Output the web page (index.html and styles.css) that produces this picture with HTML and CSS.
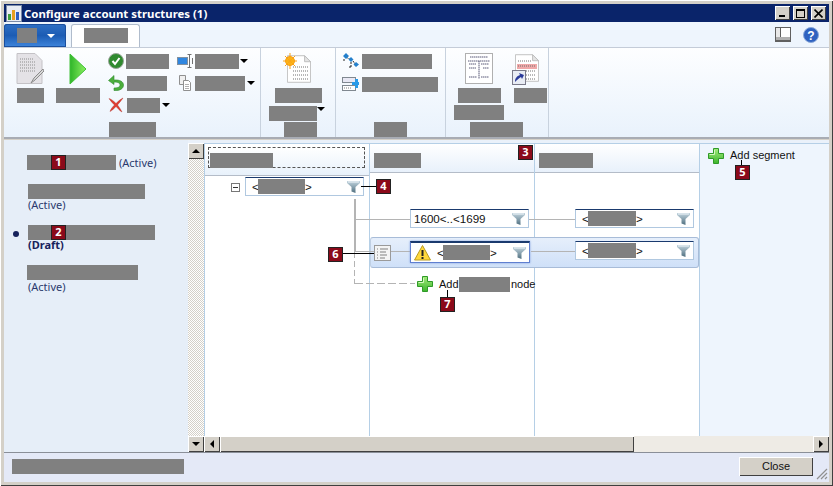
FILE: index.html
```html
<!DOCTYPE html>
<html>

<head>
    <meta charset="UTF-8">
    <title>Configure account structures (1)</title>
    <link rel="stylesheet" href="styles.css">
</head>

<body>
    <svg class="defs" width="0" height="0">
        <defs>
            <linearGradient id="g_green" x1="0" y1="0" x2="0" y2="1">
                <stop offset="0" stop-color="#a4ec7c" />
                <stop offset="1" stop-color="#3cb52c" />
            </linearGradient>
            <linearGradient id="g_play" x1="0" y1="0" x2="1" y2="0">
                <stop offset="0" stop-color="#2fb52a" />
                <stop offset="1" stop-color="#8cf060" />
            </linearGradient>
            <linearGradient id="g_filter" x1="0" y1="0" x2="0" y2="1">
                <stop offset="0" stop-color="#c4d6e0" />
                <stop offset="1" stop-color="#4f6f7f" />
            </linearGradient>
            <symbol id="i_plus" viewBox="0 0 16 16">
                <path d="M5.500 .5h5v5h5v5h-5v5h-5v-5h-5v-5h5z" fill="url(#g_green)" stroke="#2f9a28" />
                <path d="M6.500 2v4.500h-5" fill="none" stroke="#d6f8c0" />
            </symbol>
            <symbol id="i_filter" viewBox="0 0 13 12">
                <path d="M0 0h13v2l-4.500 4v6l-4-1.500v-4.500l-4.500-4z" fill="url(#g_filter)" />
                <path d="M1 1h11" stroke="#eef4f8" />
            </symbol>
            <symbol id="i_page" viewBox="0 0 28 32">
                <path d="M.5 .5h20l7 7v24h-27z" fill="#fff" stroke="#b8b8b8" />
                <path d="M20.500 .5v7h7z" fill="#e4e4e4" stroke="#b8b8b8" />
            </symbol>
        </defs>
    </svg>

    <div class="window">
        <!-- 标题栏 -->
        <div class="titlebar">
            <svg class="title_icon" width="16" height="17" viewBox="0 0 16 17">
                <rect x=".5" y=".5" width="15" height="16" fill="#e8ecf4" stroke="#7a8aa8" />
                <rect x="2" y="9" width="3" height="6" fill="#3f9f3f" />
                <rect x="6" y="5" width="3" height="10" fill="#e8a020" />
                <rect x="10" y="7" width="3" height="8" fill="#3060c0" />
            </svg>
            <span class="title_text">Configure account structures (1)</span>
            <div class="win_btns">
                <div class="win_btn"><i class="min_mark"></i></div>
                <div class="win_btn"><i class="max_mark"></i></div>
                <div class="win_btn win_close">
                    <svg width="9" height="9" viewBox="0 0 9 9">
                        <path d="M.5 .5l8 8M8.500 .5l-8 8" stroke="#000" stroke-width="1.600" />
                    </svg>
                </div>
            </div>
        </div>

        <!-- 选项卡 -->
        <div class="tabrow">
            <div class="file_btn"><span class="gray w20"></span><i class="file_arrow"></i></div>
            <div class="tab"><span class="gray w44"></span></div>
            <div class="tab_tools">
                <svg width="16" height="15" viewBox="0 0 16 15">
                    <rect x=".5" y=".5" width="15" height="13" fill="#fff" stroke="#606060" />
                    <rect x="1" y="10" width="14" height="3" fill="#b0b0b0" />
                    <rect x="1" y="1" width="4" height="9" fill="#e8e8e8" />
                    <path d="M5.500 1v9M0 14.500h16" stroke="#606060" />
                </svg>
                <svg width="16" height="16" viewBox="0 0 16 16">
                    <circle cx="8" cy="8" r="7.500" fill="#2f62c0" stroke="#8aa8d8" />
                    <text x="8" y="12.500" class="help_mark">?</text>
                </svg>
            </div>
        </div>

        <!-- 功能区 -->
        <div class="ribbon">
            <div class="group group_a">
                <div class="group_body">
                    <div class="big big_a">
                        <svg width="28" height="32" viewBox="0 0 28 32">
                            <path d="M1 .5h18l7 7v23h-25z" fill="#e4e2e6" stroke="#c4c2c6" />
                            <path d="M4 6h14M4 9h16M4 12h16M4 15h16M4 18h16" stroke="#8c8c8c" stroke-dasharray="1 1" />
                            <path d="M15 30l3-5 9-9 1 2-9 9z" fill="#d8d8d8" stroke="#8a8a8a" />
                        </svg>
                        <span class="gray w27"></span>
                    </div>
                    <div class="big big_b">
                        <svg width="18" height="32" viewBox="0 0 18 32">
                            <path d="M1 1l16 15-16 15z" fill="url(#g_play)" stroke="#40c038" />
                        </svg>
                        <span class="gray w44"></span>
                    </div>
                    <div class="small_col col_a">
                        <div class="small_row">
                            <svg width="16" height="16" viewBox="0 0 16 16">
                                <circle cx="8" cy="8" r="7.500" fill="#2f8a2f" stroke="#9aa69a" />
                                <path d="M4.500 8l2.500 3 4.500-6" fill="none" stroke="#fff" stroke-width="2" />
                            </svg>
                            <span class="gray w43"></span>
                        </div>
                        <div class="small_row wide">
                            <svg width="16" height="16" viewBox="0 0 16 16">
                                <path d="M6 .5l-5.500 5 5.500 4v-2.500c4 0 6 1 6 3s-2 3-6 3v2.500c6 .5 9.500-2 9.500-5.500s-4-5.500-9.500-5z" fill="#4caf3c" stroke="#2f8a2f" stroke-width=".6" />
                            </svg>
                            <span class="gray w40"></span>
                        </div>
                        <div class="small_row wide">
                            <svg width="16" height="16" viewBox="0 0 16 16">
                                <path d="M1 1.500c3 1 5 3 7 5 2-2 4-4 7-5.500-2 3-4 5-5.500 7 1.500 2 3 4 4.500 7-2-1-4-3.500-6-5.500-2 2-4 4-6 5 1-3 3-5 4.500-6.500-2-2-4-4-5.500-6.500z" fill="#e03c30" stroke="#a82820" stroke-width=".4" />
                            </svg>
                            <span class="gray w33"></span>
                            <i class="drop"></i>
                        </div>
                    </div>
                    <div class="small_col col_b">
                        <div class="small_row">
                            <svg width="16" height="16" viewBox="0 0 16 16">
                                <rect x=".5" y="4.500" width="10" height="7" fill="#2f86e0" stroke="#8090a0" />
                                <path d="M10.500 1.500h4M12.500 1.500v13M10.500 14.500h4M15.500 5v6" fill="none" stroke="#707070" />
                            </svg>
                            <span class="gray w44"></span>
                            <i class="drop tight"></i>
                        </div>
                        <div class="small_row">
                            <svg width="16" height="16" viewBox="0 0 16 16">
                                <path d="M2.500 .5h6v9h-6z" fill="#f0f0f0" stroke="#909090" />
                                <path d="M6.500 5.500h5l2 2v8h-7z" fill="#fff" stroke="#909090" />
                                <path d="M8 9.500h4M8 11.500h4M8 13.500h4" stroke="#b0b0b0" />
                            </svg>
                            <span class="gray w50"></span>
                            <i class="drop"></i>
                        </div>
                    </div>
                </div>
                <span class="gray w47 group_label label_a"></span>
            </div>

            <div class="group group_b">
                <div class="group_body stack">
                    <svg class="new_icon" width="29" height="32" viewBox="0 0 29 32">
                        <use href="#i_page" x="4" y="1" width="24" height="30" />
                        <path d="M10 14h15M10 18h15M10 22h15M10 26h15" stroke="#707070" stroke-dasharray="1 1" />
                        <circle cx="7" cy="8" r="4.500" fill="#fdb915" stroke="#f79a10" />
                        <path d="M7 0v16M0 8h14M2 3l10 10M12 3l-10 10" stroke="#f9a318" />
                    </svg>
                    <span class="gray w47 lb_a"></span>
                    <div class="lb_b"><span class="gray w48"></span><i class="drop"></i></div>
                </div>
                <span class="gray w33 group_label label_b"></span>
            </div>

            <div class="group group_c">
                <div class="group_body stack2">
                    <div class="small_row">
                        <svg width="17" height="16" viewBox="0 0 17 16">
                            <path d="M2 6v3M4 4l5 3M9 9v5M7 14h3M11 8l2 3" fill="none" stroke="#222" stroke-dasharray="2 1" />
                            <path d="M4 0l3 3-3 3-3-3zM9 4l2.500 2.500-2.500 2.500-2.500-2.500zM14 9l3 2.500-3 2.500-2.500-2.500z" fill="#2480cc" />
                        </svg>
                        <span class="gray w70"></span>
                    </div>
                    <div class="small_row row_c2">
                        <svg width="17" height="16" viewBox="0 0 17 16">
                            <rect x=".5" y="1.500" width="13" height="5" fill="#e8e8f4" stroke="#808890" />
                            <rect x=".5" y="9.500" width="13" height="5" fill="#fff" stroke="#808890" />
                            <path d="M2 12h8" stroke="#808080" stroke-dasharray="1 1" />
                            <path d="M10 6h3v-3h3v3h1v3h-1v3h-3v-3h-3z" fill="#2a9ae8" />
                        </svg>
                        <span class="gray w76"></span>
                    </div>
                </div>
                <span class="gray w33 group_label label_c"></span>
            </div>

            <div class="group group_d">
                <div class="group_body flow_d">
                    <div class="big big_c">
                        <svg width="28" height="32" viewBox="0 0 28 32">
                            <rect x=".5" y=".5" width="27" height="30" fill="#fff" stroke="#b0b0b0" />
                            <path d="M5 4h18M3 8h22M14 8v18M4 11h7M16 11h8M4 15h7M18 15h6M4 24h8M16 24h8" stroke="#5a5a78" stroke-dasharray="1.500 .5" />
                        </svg>
                        <span class="gray w43"></span>
                        <span class="gray w50 low"></span>
                    </div>
                    <div class="big big_d">
                        <svg width="28" height="32" viewBox="0 0 28 32">
                            <use href="#i_page" x="3" y="0" width="24" height="30" />
                            <rect x="5" y="11" width="20" height="5" fill="#f0a8a8" />
                            <path d="M6 8h14M6 13h18M6 18h18M6 22h18M6 26h18" stroke="#707070" stroke-dasharray="1 1" />
                            <rect x=".5" y="17.500" width="13" height="14" fill="#e8ecf4" stroke="#7a7a8a" />
                            <path d="M3 29c0-4 2-6 5-7l-1-2 5 2-2 4-1-2c-2 1-4 3-6 5z" fill="#2a3a9a" />
                        </svg>
                        <span class="gray w33"></span>
                    </div>
                </div>
                <span class="gray w53 group_label label_d"></span>
            </div>
        </div>

        <div class="main">
            <!-- 左侧列表 -->
            <div class="left_pane">
                <div class="ver ver_a">
                    <span class="gray w89"></span><span class="state inline">(Active)</span><b class="badge badge_1">1</b>
                </div>
                <div class="ver ver_b">
                    <span class="gray w117"></span>
                    <span class="state">(Active)</span>
                </div>
                <div class="ver ver_c">
                    <i class="dot"></i>
                    <span class="gray w127"></span><b class="badge badge_2">2</b>
                    <span class="state draft">(Draft)</span>
                </div>
                <div class="ver ver_d">
                    <span class="gray w111"></span>
                    <span class="state">(Active)</span>
                </div>
            </div>

            <!-- 竖滚动条 -->
            <div class="vbar">
                <div class="sbtn"><i class="tri tri_up"></i></div>
                <div class="sbtn"><i class="tri tri_down"></i></div>
            </div>

            <div class="tree_wrap">
                <div class="tree">
                    <div class="col">
                        <div class="col_head"><div class="focus"><span class="gray w63"></span></div></div>
                    </div>
                    <div class="col">
                        <div class="col_head col_pad"><span class="gray w47"></span></div>
                    </div>
                    <div class="col">
                        <div class="col_head col_pad"><span class="gray w54"></span></div>
                    </div>
                    <div class="col_add">
                        <svg width="16" height="16"><use href="#i_plus" /></svg>
                        <span class="add_seg">Add segment</span>
                    </div>

                    <!-- 树节点 -->
                    <i class="wire v_solid"></i>
                    <i class="wire v_dash"></i>
                    <i class="wire h_a"></i>
                    <i class="wire h_dash"></i>
                    <i class="wire h_c"></i>

                    <div class="sel_row">
                        <i class="wire s_a"></i>
                        <i class="wire s_b"></i>
                        <i class="wire s_c"></i>
                        <svg class="rule_icon" width="17" height="16" viewBox="0 0 17 16">
                            <rect x=".5" y=".5" width="16" height="15" fill="#f4f4f4" stroke="#9a9a9a" />
                            <path d="M3 4h1M3 7h1M3 10h1M3 13h1M6 4h8M6 7h6M6 10h7M6 13h5" stroke="#808080" />
                        </svg>
                    </div>

                    <div class="node node_a"><span class="lt">&lt;</span><span class="gray w47"></span><span>&gt;</span><svg class="fil" width="13" height="12"><use href="#i_filter" /></svg></div>
                    <div class="node node_b"><span>1600&lt;..&lt;1699</span><svg class="fil" width="13" height="12"><use href="#i_filter" /></svg></div>
                    <div class="node node_c node_sel">
                        <svg class="warn" width="17" height="16" viewBox="0 0 17 16">
                            <path d="M8.500 .5l8 14.500h-16z" fill="#ffd83c" stroke="#b89a20" />
                            <path d="M8.500 5v6M8.500 12v2" stroke="#222" stroke-width="2" />
                        </svg>
                        <span class="lt">&lt;</span><span class="gray w47"></span><span>&gt;</span><svg class="fil" width="13" height="12"><use href="#i_filter" /></svg>
                    </div>
                    <div class="node node_d"><span class="lt">&lt;</span><span class="gray w48"></span><span>&gt;</span><svg class="fil" width="13" height="12"><use href="#i_filter" /></svg></div>
                    <div class="node node_e"><span class="lt">&lt;</span><span class="gray w48"></span><span>&gt;</span><svg class="fil" width="13" height="12"><use href="#i_filter" /></svg></div>

                    <div class="minus"></div>

                    <div class="add_node">
                        <svg width="16" height="16"><use href="#i_plus" /></svg>
                        <span class="add_txt">Add</span><span class="gray w51"></span><span>node</span>
                    </div>

                    <!-- 标注 -->
                    <b class="badge badge_3">3</b>
                    <i class="lead lead_4"></i><b class="badge badge_4">4</b>
                    <i class="lead lead_5"></i><b class="badge badge_5">5</b>
                    <i class="lead lead_6"></i><b class="badge badge_6">6</b>
                    <i class="lead lead_7"></i><b class="badge badge_7">7</b>
                </div>

                <!-- 横滚动条 -->
                <div class="hbar">
                    <div class="sbtn"><i class="tri tri_left"></i></div>
                    <div class="hthumb"></div>
                    <div class="htrack"></div>
                    <div class="sbtn"><i class="tri tri_right"></i></div>
                </div>
            </div>
        </div>

        <div class="statusbar">
            <span class="gray w172"></span>
            <button class="close_btn">Close</button>
            <svg class="grip" width="12" height="12" viewBox="0 0 12 12">
                <path d="M11 1l-10 10M11 5l-6 6M11 9l-2 2" stroke="#909090" stroke-width="1.200" />
            </svg>
        </div>
    </div>
</body>

</html>
```

FILE: styles.css
```css
* {
    padding: 0;
    margin: 0;
    box-sizing: border-box;
}

body {
    width: 833px;
    height: 486px;
    overflow: hidden;
    font-family: "Liberation Sans", sans-serif;
    font-size: 11px;
    color: #111;
}

i {
    display: block;
}

svg {
    display: block;
    flex: none;
}

.defs {
    position: absolute;
}

.window {
    display: flex;
    flex-direction: column;
    width: 833px;
    height: 486px;
    padding: 4px 4px 4px;
    background: #d4d0c8;
    box-shadow: inset 1px 1px 0 #fff, inset -1px -1px 0 #404040;
}

/* 灰色遮挡块 */
.gray {
    display: block;
    flex: none;
    height: 15px;
    background: #808080;
}

.w20 { width: 20px; }
.w27 { width: 27px; }
.w33 { width: 33px; }
.w40 { width: 40px; }
.w43 { width: 43px; }
.w44 { width: 44px; }
.w47 { width: 47px; }
.w48 { width: 48px; }
.w50 { width: 50px; }
.w51 { width: 51px; }
.w53 { width: 53px; }
.w54 { width: 54px; }
.w63 { width: 63px; }
.w70 { width: 70px; }
.w76 { width: 76px; }
.w89 { width: 89px; }
.w111 { width: 111px; }
.w117 { width: 117px; }
.w127 { width: 127px; }
.w172 { width: 172px; }

.titlebar {
    display: flex;
    align-items: center;
    flex: none;
    height: 18px;
    padding: 0 2px;
    background: #0a246a;
}

.title_text {
    margin-left: 2px;
    color: #fff;
    font-size: 11.4px;
    font-weight: bold;
    font-family: "Noto Sans", sans-serif;
}

.win_btns {
    display: flex;
    margin-left: auto;
    margin-right: 1px;
}

.win_btn {
    display: flex;
    align-items: center;
    justify-content: center;
    width: 15px;
    height: 14px;
    margin-left: 3px;
    background: #d4d0c8;
    box-shadow: inset 1px 1px 0 #fff, inset -1px -1px 0 #404040;
}

.min_mark {
    width: 6px;
    height: 2px;
    margin-top: 6px;
    margin-right: 2px;
    background: #000;
}

.max_mark {
    width: 9px;
    height: 9px;
    border: 1px solid #000;
    border-top-width: 2px;
}

.tabrow {
    display: flex;
    align-items: flex-end;
    flex: none;
    height: 25px;
    background: #eef5fd;
}

.file_btn {
    display: flex;
    align-items: center;
    width: 62px;
    height: 23px;
    padding-left: 13px;
    border-radius: 3px 3px 0 0;
    background: linear-gradient(#2f6fc4, #1c5cb4 50%, #3f86dc);
    box-shadow: inset 0 0 0 1px #1a4f9e;
}

.file_arrow {
    margin-left: 10px;
    border: 4px solid transparent;
    border-top: 4px solid #fff;
    border-bottom: 0;
}

.tab {
    display: flex;
    justify-content: center;
    align-items: center;
    width: 69px;
    height: 23px;
    margin-left: 5px;
    padding-bottom: 1px;
    border: 1px solid #b0bccc;
    border-bottom: 0;
    border-radius: 3px 3px 0 0;
    background: #fff;
}

.tab_tools {
    display: flex;
    align-items: center;
    gap: 12px;
    height: 25px;
    margin-left: auto;
    margin-right: 10px;
}

.help_mark {
    fill: #fff;
    font-size: 12px;
    font-weight: bold;
    text-anchor: middle;
    font-family: "Liberation Sans", sans-serif;
}

/* ribbon */
.ribbon {
    display: flex;
    flex: none;
    height: 92px;
    border-bottom: 2px solid #a8acb4;
    border-top: 1px solid #c4ccd8;
    background: linear-gradient(#fdfeff, #e9f2fc);
}

.group {
    display: flex;
    flex-direction: column;
    padding-top: 5px;
    border-right: 1px solid #c8d2de;
}

.group_body {
    height: 68px;
}

.group_a { width: 257px; }
.group_b { width: 75px; }
.group_c { width: 110px; }
.group_d { width: 103px; }

.group_a .group_body {
    display: flex;
}

.big {
    display: flex;
    flex-direction: column;
    align-items: center;
    gap: 3px;
}

.big_a {
    margin-left: 12px;
}

.big_b {
    margin-left: 12px;
}

.small_col {
    display: flex;
    flex-direction: column;
    gap: 6px;
}

.col_a {
    margin-left: 8px;
    width: 69px;
}

.small_row {
    display: flex;
    align-items: center;
    gap: 2px;
}

.small_row.wide {
    gap: 3px;
}

.wide .drop {
    margin-left: -1px;
}

.drop {
    border: 4px solid transparent;
    border-top: 4px solid #000;
    border-bottom: 0;
}

.drop.tight {
    margin-left: -1px;
}

.group_label {
    margin-top: auto;
}

.label_a { margin-left: 105px; }
.label_b { margin-left: 23px; }
.label_c { margin-left: 38px; }
.label_d { margin-left: 24px; }

.stack {
    display: flex;
    flex-direction: column;
}

.new_icon {
    margin-left: 22px;
}

.lb_a {
    margin: 3px 0 0 14px;
}

.lb_b {
    display: flex;
    align-items: flex-start;
    margin: 3px 0 0 8px;
}

.lb_b .drop {
    margin-top: 1px;
}

.stack2 {
    padding-left: 6px;
}

.row_c2 {
    margin-top: 7px;
}

.stack2 .small_row {
    gap: 3px;
}

.flow_d {
    display: flex;
}

.big_c {
    margin-left: 8px;
    width: 50px;
}

.low {
    margin-top: -1px;
}

.big_d {
    align-items: flex-start;
    margin-left: 8px;
}

.big_d .gray {
    margin-left: 2px;
}

/* main */
.main {
    display: flex;
    flex: 1;
    min-height: 0;
    margin-top: 1px;
    border-bottom: 1px solid #8a8f98;
    background: #eaf1fa;
}

.left_pane {
    width: 184px;
    padding-top: 15px;
    background: #e6eef8;
}

.ver {
    position: relative;
    padding-left: 24px;
}

.ver_a {
    display: flex;
    align-items: center;
    padding-left: 23px;
}

.ver_b {
    margin-top: 14px;
}

.ver_c {
    margin-top: 13px;
}

.ver_d {
    margin-top: 15px;
    padding-left: 23px;
}

.state {
    display: block;
    height: 14px;
    color: #2b3a6e;
    line-height: 14px;
    font-family: "Noto Sans", sans-serif;
    font-size: 11px;
}

.inline {
    margin-left: 3px;
}

.ver_b .state {
    margin-top: -1px;
}

.ver_d .state {
    margin-left: 1px;
}

.draft {
    height: 10px;
    color: #16225c;
    font-weight: bold;
    line-height: 10px;
}

.dot {
    position: absolute;
    left: 9px;
    top: 6px;
    width: 6px;
    height: 6px;
    border-radius: 50%;
    background: #16225c;
}

/* scrollbars */
.vbar {
    display: flex;
    flex-direction: column;
    justify-content: space-between;
    width: 16px;
    margin-top: 3px;
    background: repeating-conic-gradient(#d4d0c8 0 25%, #fff 0 50%) 0 0 / 2px 2px;
}

.sbtn {
    display: flex;
    align-items: center;
    justify-content: center;
    flex: none;
    width: 16px;
    height: 16px;
    background: #d4d0c8;
    box-shadow: inset 1px 1px 0 #fff, inset -1px -1px 0 #404040;
}

.tri {
    border: 4px solid transparent;
}

.tri_up {
    border-top: 0;
    border-bottom-color: #000;
}

.tri_down {
    border-bottom: 0;
    border-top-color: #000;
}

.tri_left {
    border-left: 0;
    border-right-color: #000;
}

.tri_right {
    border-right: 0;
    border-left-color: #000;
}

.tree_wrap {
    display: flex;
    flex-direction: column;
    flex: 1;
    min-width: 0;
    margin-top: 3px;
}

.tree {
    position: relative;
    display: flex;
    flex: 1;
    min-height: 0;
    border-top: 1px solid #b5cfe6;
    border-left: 1px solid #b5cfe6;
    background: #fff;
}

.col {
    flex: none;
    width: 165px;
    border-right: 1px solid #b5cfe6;
}

.col_head {
    height: 29px;
    border-bottom: 1px solid #b4bcc8;
    background: linear-gradient(#fff, #e8f1fb);
}

.focus {
    width: 157px;
    height: 21px;
    margin: 3px 0 0 3px;
    padding: 5px 0 0 1px;
    border: 1px dashed #555;
}

.col_pad {
    padding: 9px 0 0 4px;
}

.col_add {
    display: flex;
    align-items: flex-start;
    flex: 1;
    gap: 6px;
    padding: 4px 0 0 8px;
    background: #eef5fd;
    line-height: 16px;
}

.add_seg {
    margin-top: -1px;
}

.hbar {
    display: flex;
    flex: none;
    height: 16px;
    background: #eeebe5;
}

.hthumb {
    width: 414px;
    background: #d4d0c8;
    box-shadow: inset 1px 1px 0 #fff, inset -1px -1px 0 #404040;
}

.htrack {
    flex: 1;
}

/* 节点 */
.node {
    position: absolute;
    display: flex;
    align-items: center;
    width: 119px;
    height: 19px;
    padding-left: 6px;
    border: 1px solid #b0c8e0;
    border-top: 1px solid #1a3a6e;
    background: #fff;
    font-size: 11.6px;
}

.node_a { left: 40px; top: 33px; }
.node_b { left: 205px; top: 65px; padding-left: 3px; }
.node_c { left: 205px; top: 97px; height: 22px; }
.node_d { left: 370px; top: 65px; }
.node_e { left: 370px; top: 97px; }

.node_sel {
    width: 120px;
    padding-left: 3px;
    border: 1px solid #5f7fd0;
    border-top: 2px solid #1a3a6e;
    box-shadow: 0 0 2px #7f9fe0;
}

.warn {
    margin-right: 6px;
}

.lt {
    width: 6px;
}

.fil {
    margin-left: auto;
    margin-right: 3px;
}

.sel_row {
    position: absolute;
    left: 165px;
    top: 93px;
    width: 329px;
    height: 31px;
    border: 1px solid #a8bcd8;
    border-left-color: #c0d0e4;
    border-radius: 3px;
    background: linear-gradient(#e6effb, #cfe0f8);
}

.rule_icon {
    position: absolute;
    left: 3px;
    top: 7px;
}

.wire {
    position: absolute;
    background: #b4b4b4;
}

.v_solid {
    left: 149px;
    top: 55px;
    width: 2px;
    height: 53px;
}

.v_dash {
    left: 149px;
    top: 108px;
    width: 1px;
    height: 32px;
    background: repeating-linear-gradient(#b4b4b4 0 6px, transparent 6px 9px);
}

.h_a {
    left: 150px;
    top: 75px;
    width: 55px;
    height: 1px;
}

.h_c {
    left: 324px;
    top: 75px;
    width: 46px;
    height: 1px;
}

.h_dash {
    left: 150px;
    top: 139px;
    width: 60px;
    height: 1px;
    background: repeating-linear-gradient(90deg, #b4b4b4 0 8px, transparent 8px 11px);
}

.s_a {
    left: -15px;
    top: 13px;
    width: 19px;
    height: 1px;
}

.s_b {
    left: 20px;
    top: 13px;
    width: 21px;
    height: 1px;
}

.s_c {
    left: 160px;
    top: 13px;
    width: 46px;
    height: 1px;
}

.minus {
    position: absolute;
    left: 26px;
    top: 39px;
    width: 9px;
    height: 9px;
    border: 1px solid #777;
    background: linear-gradient(#333, #333) center / 5px 1px no-repeat #fff;
}

.add_node {
    position: absolute;
    left: 212px;
    top: 132px;
    display: flex;
    align-items: center;
}

.add_txt {
    width: 20px;
    margin-left: 6px;
}

.add_node .gray {
    margin-right: 1px;
}

/* 标注编号 */
.badge {
    position: absolute;
    width: 15px;
    height: 15px;
    border: 1px solid #222;
    background: #8b0a1a;
    color: #fff;
    font-size: 11px;
    font-weight: bold;
    font-family: "Noto Sans", sans-serif;
    line-height: 12px;
    text-align: center;
}

.lead {
    position: absolute;
    background: #000;
}

.badge_1 { left: 47px; top: 0; }
.badge_2 { left: 47px; top: 0; }
.badge_3 { left: 313px; top: 1px; }
.badge_4 { left: 171px; top: 35px; }
.badge_5 { left: 530px; top: 21px; }
.badge_6 { left: 123px; top: 103px; }
.badge_7 { left: 235px; top: 153px; }

.lead_4 { left: 156px; top: 42px; width: 16px; height: 1px; }
.lead_5 { left: 536px; top: 16px; width: 1px; height: 6px; }
.lead_6 { left: 137px; top: 109px; width: 32px; height: 1px; }
.lead_7 { left: 242px; top: 146px; width: 1px; height: 7px; }

.statusbar {
    position: relative;
    display: flex;
    align-items: center;
    flex: none;
    height: 29px;
    padding: 0 4px 3px 8px;
    background: #e4e9f7;
}

.close_btn {
    width: 74px;
    height: 19px;
    margin-left: auto;
    margin-right: 12px;
    border: 0;
    background: #d4d0c8;
    box-shadow: inset 1px 1px 0 #fff, inset -1px -1px 0 #404040;
    font-family: "Liberation Sans", sans-serif;
    font-size: 11px;
    color: #111;
}

.grip {
    position: absolute;
    right: 1px;
    bottom: 2px;
}
```
